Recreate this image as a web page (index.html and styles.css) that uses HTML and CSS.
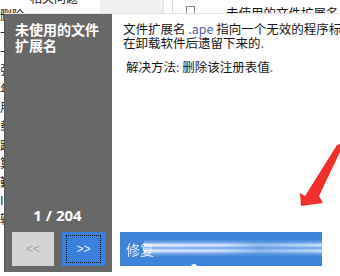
FILE: index.html
```html
<!DOCTYPE html>
<html lang="zh">
<head>
<meta charset="utf-8">
<link rel="stylesheet" href="styles.css">
</head>
<body>
<div class="bg">
  <div class="bg-top">
    <div class="bg-left">
      <div class="bg-head"><span class="bg-icon"></span>相关问题</div>
      <div class="bg-row">删除</div>
    </div>
    <div class="bg-gray"></div>
    <div class="bg-list">
      <span class="bg-sep"></span>
      <span class="chk"></span>
      <span class="bg-name">未使用的文件扩展名</span>
    </div>
  </div>
  <div class="bg-col">
    <div>卡</div><div>卡</div><div>张</div><div>年</div><div>用</div><div>载</div><div>跨</div><div>算</div><div>勤</div><div>I</div><div>输</div>
  </div>
</div>

<div class="popup">
  <div class="side">
    <div class="title">未使用的文件<br>扩展名</div>
    <div class="count">1 / 204</div>
    <div class="nav">
      <button class="btn prev">&lt;&lt;</button>
      <button class="btn next"><span class="focus">&gt;&gt;</span></button>
    </div>
  </div>
  <div class="main">
    <p class="line">文件扩展名 <span class="ext">.ape</span> 指向一个无效的程序标识符,</p>
    <p class="line">在卸载软件后遗留下来的<span class="dot">.</span></p>
    <p class="line sol">解决方法<span class="dot">:</span> 删除该注册表值<span class="dot">.</span></p>
    <div class="fix">
      <span class="fix-label">修复</span>
      <span class="streak"></span>
      <span class="notch"></span>
    </div>
  </div>
</div>

<svg class="arrow" width="60" height="80" viewBox="0 0 60 80">
  <polygon points="60,3 60,11 39,55 43,62 21,65 20,52 25,55 57,4" fill="#f2302b"/>
</svg>
</body>
</html>
```

FILE: styles.css
```css
html, body {
  margin: 0;
  padding: 0;
}
body {
  width: 340px;
  height: 276px;
  overflow: hidden;
  position: relative;
  background: #ffffff;
  font-family: "Noto Sans CJK SC", "Noto Sans", sans-serif;
  color: #111;
}

/* background window */
.bg-top {
  display: flex;
  height: 13px;
}
.bg-left {
  width: 100px;
  font-size: 12px;
  line-height: 12px;
  height: 13px;
}
.bg-head {
  margin-top: -8px;
  padding-left: 22px;
  display: flex;
  align-items: center;
  gap: 3px;
  height: 12px;
}
.bg-icon {
  width: 5px;
  height: 4px;
  background: linear-gradient(90deg, #e05050, #3a8ad8);
}
.bg-row {
  margin-top: 5px;
}
.bg-gray {
  width: 63px;
  background: #f0f0f0;
  border-right: 1px solid #e2e2e2;
}
.bg-list {
  flex: 1;
  display: flex;
  align-items: flex-start;
  font-size: 12.5px;
  line-height: 13px;
  overflow: hidden;
}
.bg-sep {
  width: 1px;
  height: 13px;
  background: #d8d8d8;
  margin-left: 8px;
}
.chk {
  width: 9px;
  height: 9px;
  border: 1px solid #8a8a8a;
  margin: 6px 0 0 13px;
  box-sizing: border-box;
}
.bg-name {
  margin: 6px 0 0 31px;
  white-space: nowrap;
}
.bg-col {
  font-size: 12px;
  line-height: 18.6px;
  padding-top: 11px;
  color: #222;
}

/* popup */
.popup {
  position: absolute;
  left: 4px;
  top: 13px;
  width: 336px;
  height: 259px;
  display: flex;
  border-top: 1px solid #e4e4e4;
  box-sizing: border-box;
}
.side {
  width: 108px;
  background: #686868;
  border-left: 1px solid #5a5a5a;
  box-sizing: border-box;
  display: flex;
  flex-direction: column;
  padding: 8px 7px 6px 7px;
  color: #fff;
}
.title {
  font-size: 14px;
  line-height: 15.5px;
  font-weight: bold;
  padding-left: 3px;
  flex: 1;
}
.count {
  text-align: center;
  font-size: 15px;
  line-height: 16px;
  font-weight: bold;
  font-family: "Noto Sans", sans-serif;
  margin-bottom: 9px;
  padding-right: 2px;
}
.nav {
  display: flex;
  gap: 8px;
}
.btn {
  height: 34px;
  border: none;
  padding: 0;
  margin: 0;
  font-family: "Liberation Sans", sans-serif;
  font-size: 12px;
  display: flex;
  align-items: center;
  justify-content: center;
}
.prev {
  width: 42px;
  background: #d4d4d4;
  color: #a4a4a4;
}
.next {
  width: 43px;
  background: #3b80dc;
  color: #e8f0ff;
  padding: 3px 4px;
  box-sizing: border-box;
}
.focus {
  flex: 1;
  align-self: stretch;
  border: 1px dotted #111;
  display: flex;
  align-items: center;
  justify-content: center;
}

.main {
  flex: 1;
  background: #fff;
  display: flex;
  flex-direction: column;
  padding: 8px 0 6px 8px;
  overflow: hidden;
  min-width: 0;
}
.line {
  margin: 0;
  padding-left: 3px;
  font-size: 12.5px;
  line-height: 14px;
  white-space: nowrap;
  color: #151515;
}
.ext {
  color: #5a62a0;
}
.dot {
  color: #7a4aa0;
}
.sol {
  margin-top: 10px;
  padding-left: 6px;
}
.fix {
  margin-top: auto;
  width: 202px;
  height: 34px;
  background: #3e84da;
  position: relative;
  display: flex;
  align-items: center;
  padding-left: 6px;
  box-sizing: border-box;
  color: #fff;
  font-size: 14px;
}
.fix-label {
  opacity: 0.85;
}
.streak {
  position: absolute;
  left: 24px;
  right: 0;
  top: 7px;
  height: 18px;
  background:
    linear-gradient(180deg,
      rgba(255,255,255,0) 0%,
      rgba(200,225,255,0.35) 18%,
      rgba(255,255,255,0.95) 34%,
      rgba(170,205,250,0.55) 50%,
      rgba(255,255,255,0.9) 66%,
      rgba(200,225,255,0.35) 82%,
      rgba(255,255,255,0) 100%);
  -webkit-mask-image: linear-gradient(90deg, #000 0%, rgba(0,0,0,0.9) 45%, rgba(0,0,0,0.55) 65%, rgba(0,0,0,0.85) 100%);
  mask-image: linear-gradient(90deg, #000 0%, rgba(0,0,0,0.9) 45%, rgba(0,0,0,0.55) 65%, rgba(0,0,0,0.85) 100%);
}
.notch {
  position: absolute;
  left: 71px;
  bottom: -1px;
  width: 6px;
  height: 3px;
  background: #fff;
  border-radius: 3px 3px 0 0;
}

.arrow {
  position: absolute;
  left: 280px;
  top: 141px;
}
```
